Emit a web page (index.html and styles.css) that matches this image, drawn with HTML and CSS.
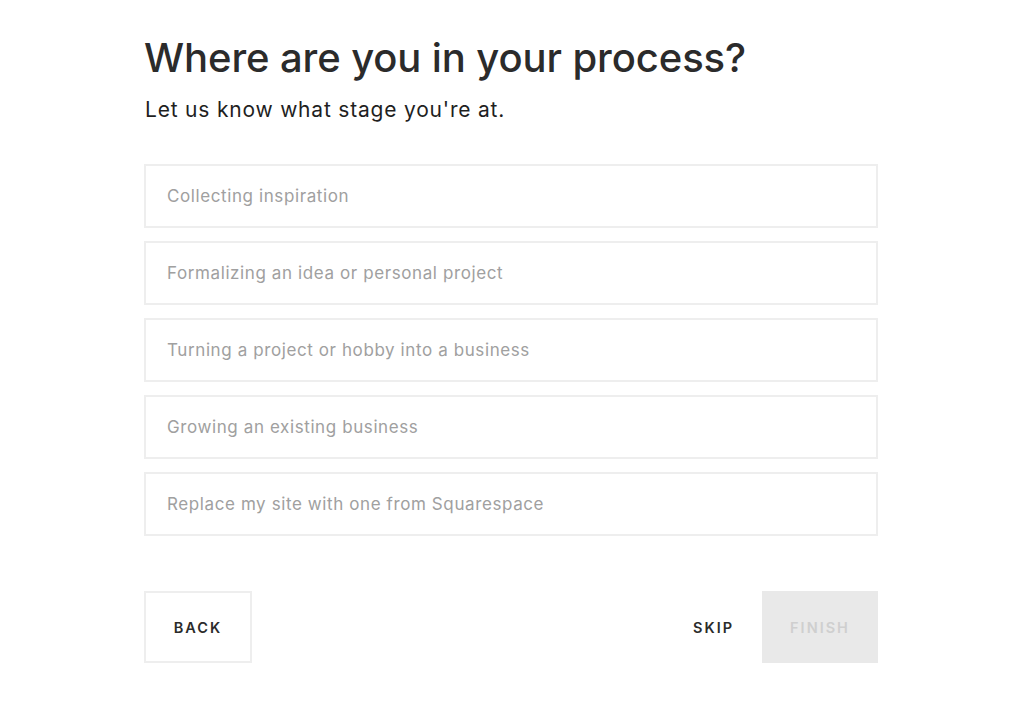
FILE: index.html
```html
<!DOCTYPE html>
<html lang="en">
<head>
<meta charset="utf-8">
<title>Where are you in your process?</title>
<link rel="stylesheet" href="styles.css">
</head>
<body>
<main class="page">
  <h1 class="title">Where are you in your process?</h1>
  <p class="subtitle">Let us know what stage you're at.</p>
  <ul class="options">
    <li class="option">Collecting inspiration</li>
    <li class="option">Formalizing an idea or personal project</li>
    <li class="option">Turning a project or hobby into a business</li>
    <li class="option">Growing an existing business</li>
    <li class="option">Replace my site with one from Squarespace</li>
  </ul>
  <div class="actions">
    <button class="btn btn-back">BACK</button>
    <div class="actions-right">
      <button class="btn btn-skip">SKIP</button>
      <button class="btn btn-finish">FINISH</button>
    </div>
  </div>
</main>
</body>
</html>
```

FILE: styles.css
```css
* { box-sizing: border-box; }
html, body { margin: 0; padding: 0; background: #fff; }
body {
  font-family: "Inter", "Liberation Sans", sans-serif;
  color: #2b2b2b;
}
.page {
  width: 734px;
  margin-left: 144px;
  padding-top: 34px;
}
.title {
  margin: 0;
  font-size: 40px;
  line-height: 48px;
  font-weight: 500;
  letter-spacing: -0.1px;
  color: #2b2b2b;
}
.subtitle {
  margin: 14px 0 0 1px;
  font-size: 21px;
  line-height: 28px;
  letter-spacing: 0.8px;
  color: #1f1f1f;
}
.options {
  list-style: none;
  margin: 40px 0 0;
  padding: 0;
  display: flex;
  flex-direction: column;
  gap: 13px;
}
.option {
  height: 64px;
  border: 2px solid #eeeeee;
  display: flex;
  align-items: center;
  padding-left: 21px;
  font-size: 17px;
  letter-spacing: 0.6px;
  color: #a0a0a0;
}
.actions {
  margin-top: 55px;
  display: flex;
  justify-content: space-between;
  align-items: center;
}
.actions-right {
  display: flex;
  align-items: center;
  gap: 28px;
}
.btn {
  font-family: inherit;
  font-size: 14.5px;
  font-weight: 600;
  letter-spacing: 2px;
  background: none;
  border: none;
  cursor: pointer;
  padding: 0;
  color: #2b2b2b;
}
.btn-back {
  width: 108px;
  height: 72px;
  border: 2px solid #eeeeee;
  background: #fff;
}
.btn-skip { height: 72px; }
.btn-finish {
  width: 116px;
  height: 72px;
  background: #e9e9e9;
  color: #cfcfcf;
}
```
